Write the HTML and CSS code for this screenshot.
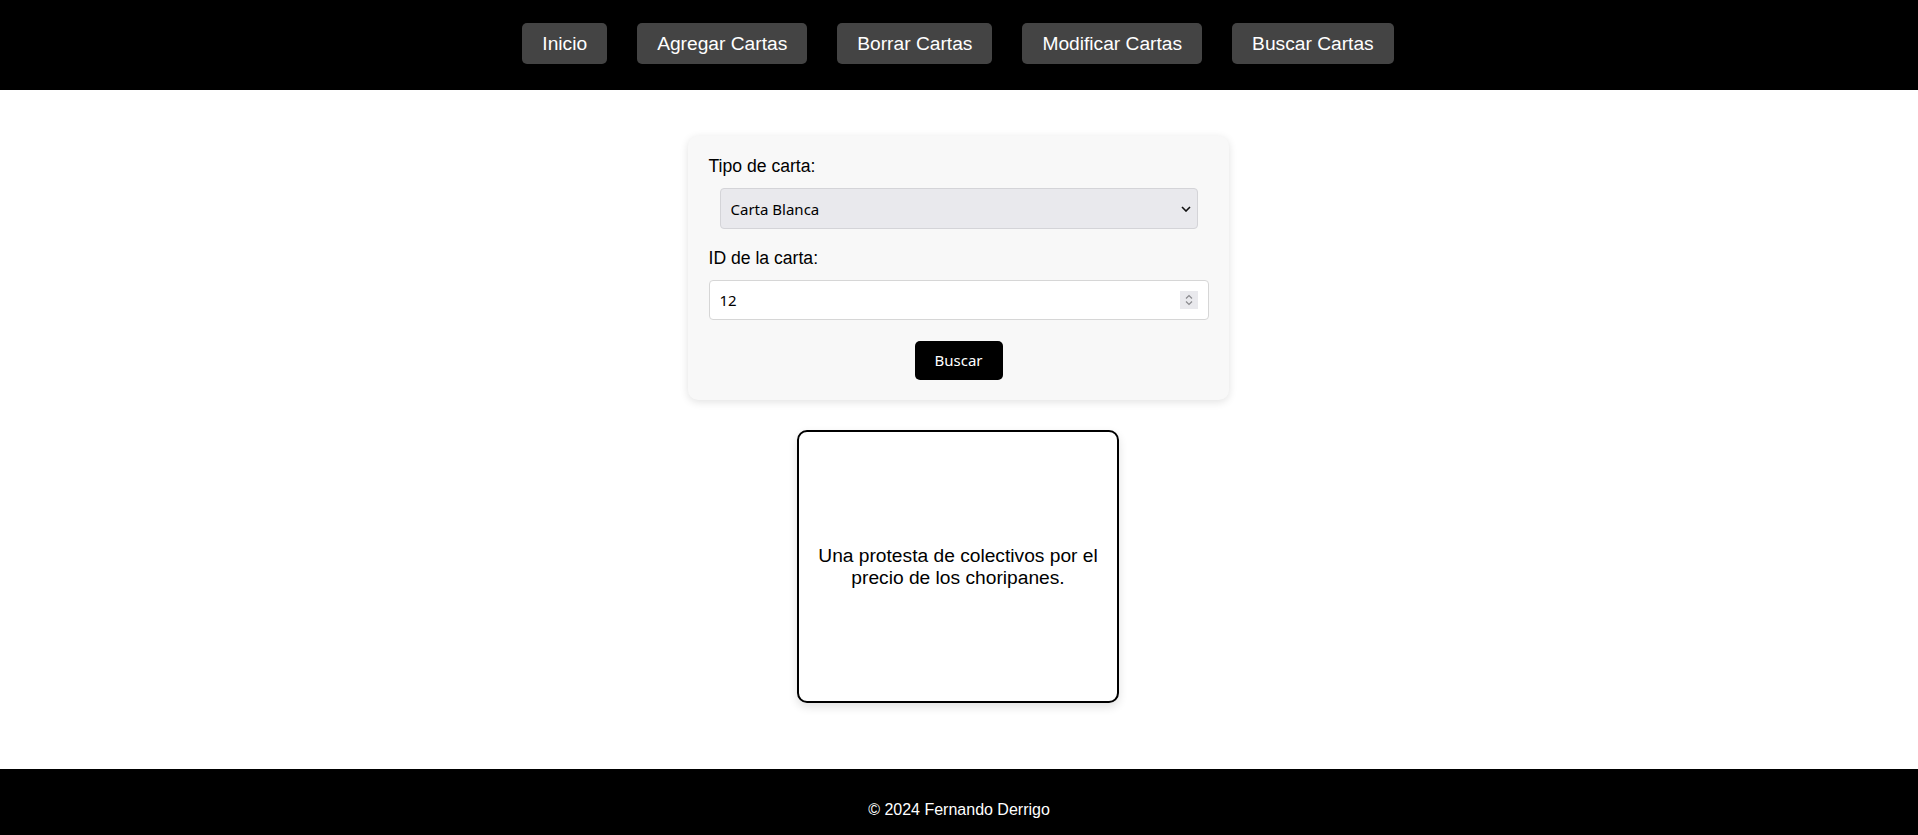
FILE: index.html
```html
<!DOCTYPE html>
<html lang="es">
<head>
<meta charset="utf-8">
<title>Buscar Cartas</title>
<link rel="stylesheet" href="styles.css">
</head>
<body>
<header class="site-header">
  <nav class="nav">
    <a class="nav-btn" href="#">Inicio</a>
    <a class="nav-btn" href="#">Agregar Cartas</a>
    <a class="nav-btn" href="#">Borrar Cartas</a>
    <a class="nav-btn" href="#">Modificar Cartas</a>
    <a class="nav-btn" href="#">Buscar Cartas</a>
  </nav>
</header>
<main class="main">
  <form class="search-form">
    <label class="field-label" for="tipo">Tipo de carta:</label>
    <select class="field-select" id="tipo">
      <option>Carta Blanca</option>
      <option>Carta Negra</option>
    </select>
    <label class="field-label" for="cid">ID de la carta:</label>
    <div class="number-box">
      <input class="number-input" id="cid" type="text" value="12">
      <span class="spinner">
        <svg width="18" height="18" viewBox="0 0 18 18"><path d="M6 7.5 L9 4.5 L12 7.5" fill="none" stroke="#8a8a8e" stroke-width="1.2"/><path d="M6 10.5 L9 13.5 L12 10.5" fill="none" stroke="#8a8a8e" stroke-width="1.2"/></svg>
      </span>
    </div>
    <button class="submit-btn" type="button">Buscar</button>
  </form>
  <div class="card">
    <p class="card-text">Una protesta de colectivos por el precio de los choripanes.</p>
  </div>
</main>
<footer class="site-footer">
  <p class="footer-text">© 2024 Fernando Derrigo</p>
</footer>
</body>
</html>
```
FILE: styles.css
```css
* { box-sizing: border-box; }
html, body { margin: 0; padding: 0; }
body {
  font-family: "Liberation Sans", Arial, sans-serif;
  font-size: 16px;
  color: #000;
  background: #fff;
}
.site-header {
  background: #000;
  padding: 23px 0 26px;
}
.nav {
  display: flex;
  justify-content: center;
  gap: 30px;
  padding-right: 2px;
}
.nav-btn {
  display: block;
  background: #444;
  color: #fff;
  text-decoration: none;
  font-size: 19.2px;
  line-height: 21px;
  padding: 10px 20px;
  border-radius: 5px;
}
.main {
  display: flex;
  flex-direction: column;
  align-items: center;
  gap: 30px;
  padding: 46px 2px 66px 0;
}
.search-form {
  width: 541px;
  background: #f8f8f8;
  border-radius: 10px;
  box-shadow: 0 2px 8px rgba(0,0,0,0.12);
  padding: 20px 20px 20px 21px;
  display: flex;
  flex-direction: column;
}
.field-label {
  display: block;
  font-size: 17.6px;
  line-height: 20px;
  margin-bottom: 12px;
}
.field-select {
  appearance: none;
  -webkit-appearance: none;
  margin: 0 11px 19px;
  height: 41px;
  padding: 0 10px;
  font-family: "Noto Sans", sans-serif;
  font-size: 15px;
  color: #000;
  background-color: #e9e9ed;
  background-image: url("data:image/svg+xml;utf8,<svg xmlns='http://www.w3.org/2000/svg' width='10' height='6' viewBox='0 0 10 6'><path d='M1 1 L5 5 L9 1' fill='none' stroke='%23111' stroke-width='1.6'/></svg>");
  background-repeat: no-repeat;
  background-position: right 6px center;
  border: 1px solid #d4d4d8;
  border-radius: 4px;
}
.number-box {
  display: flex;
  align-items: center;
  height: 40px;
  background: #fff;
  border: 1px solid #d6d6d6;
  border-radius: 4px;
  padding: 0 10px;
  margin-bottom: 21px;
}
.number-input {
  flex: 1;
  border: 0;
  outline: none;
  background: transparent;
  padding: 0;
  font-family: "Noto Sans", sans-serif;
  font-size: 15px;
  color: #000;
}
.spinner {
  display: flex;
  width: 18px;
  height: 18px;
  background: #e9e9ed;
}
.submit-btn {
  align-self: center;
  background: #000;
  color: #fff;
  border: 0;
  border-radius: 5px;
  font-family: "Noto Sans", sans-serif;
  font-size: 15px;
  line-height: 19px;
  padding: 10px 20px;
  width: 88px;
}
.card {
  width: 322px;
  height: 273px;
  border: 2px solid #000;
  border-radius: 10px;
  background: #fff;
  box-shadow: 0 4px 10px rgba(0,0,0,0.12);
  display: flex;
  align-items: center;
  justify-content: center;
  padding: 0 15px;
}
.card-text {
  margin: 0;
  text-align: center;
  font-size: 19.2px;
  line-height: 22px;
}
.site-footer {
  background: #000;
  color: #fff;
  text-align: center;
  padding: 32px 0 30px;
}
.footer-text {
  margin: 0;
  font-size: 16px;
  line-height: 18px;
}
```
